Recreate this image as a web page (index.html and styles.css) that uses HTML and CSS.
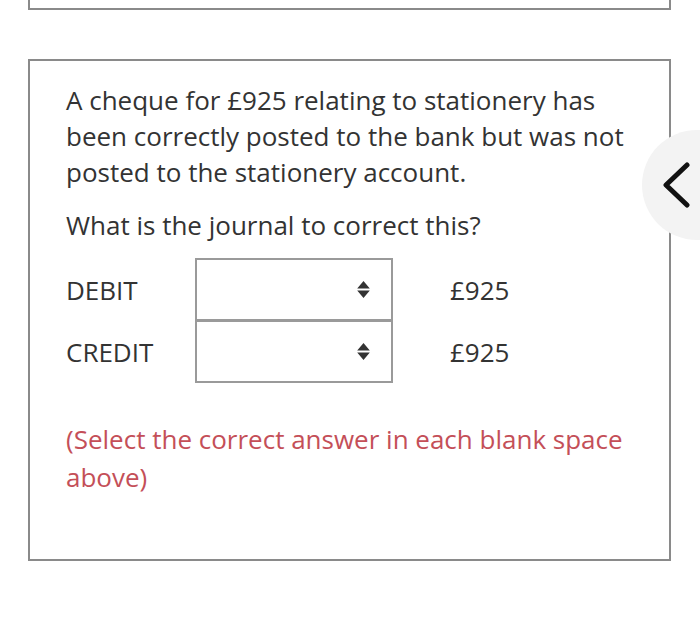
FILE: index.html
```html
<!DOCTYPE html>
<html>
<head>
<meta charset="utf-8">
<link rel="stylesheet" href="styles.css">
</head>
<body>
<div class="prev-card"></div>
<div class="card">
  <p class="question">A cheque for £925 relating to stationery has been correctly posted to the bank but was not posted to the stationery account.</p>
  <p class="question ask">What is the journal to correct this?</p>
  <div class="journal">
    <div class="row">
      <span class="label">DEBIT</span>
      <div class="select">
        <svg class="sort" viewBox="0 0 14 20" width="15" height="21"><path d="M7 2 L13 9 L1 9 Z M1 11 L13 11 L7 18 Z" fill="#333"/></svg>
      </div>
      <span class="amount">£925</span>
    </div>
    <div class="row second">
      <span class="label">CREDIT</span>
      <div class="select">
        <svg class="sort" viewBox="0 0 14 20" width="15" height="21"><path d="M7 2 L13 9 L1 9 Z M1 11 L13 11 L7 18 Z" fill="#333"/></svg>
      </div>
      <span class="amount">£925</span>
    </div>
  </div>
  <p class="hint">(Select the correct answer in each blank space above)</p>
</div>
<div class="nav-back">
  <svg viewBox="0 0 30 46" width="30" height="46"><path d="M26 3 L5 23 L26 43" fill="none" stroke="#111" stroke-width="5" stroke-linecap="round" stroke-linejoin="round"/></svg>
</div>
</body>
</html>
```
FILE: styles.css
```css
html, body {
  margin: 0;
  padding: 0;
  background: #ffffff;
}
body {
  font-family: "Open Sans", "Liberation Sans", sans-serif;
  color: #333333;
  position: relative;
  width: 700px;
  height: 627px;
  overflow: hidden;
}
.prev-card {
  margin-left: 28px;
  width: 639px;
  height: 8px;
  border: 2px solid #8a8a8a;
  border-top: none;
}
.card {
  margin-top: 49px;
  margin-left: 28px;
  width: 643px;
  border: 2px solid #8a8a8a;
  padding: 21px 30px 0 36px;
  box-sizing: border-box;
  height: 502px;
}
.question {
  margin: 0;
  font-size: 26px;
  line-height: 36px;
  color: #333333;
}
.ask {
  margin-top: 17px;
}
.journal {
  margin-top: 15px;
  display: flex;
  flex-direction: column;
}
.row {
  display: grid;
  grid-template-columns: 129px 198px auto;
  align-items: center;
  height: 63px;
}
.row.second {
  margin-top: -1px;
}
.label {
  font-size: 26px;
  color: #333333;
}
.select {
  height: 100%;
  box-sizing: border-box;
  border: 2px solid #9a9a9a;
  display: flex;
  align-items: center;
  justify-content: flex-end;
  padding-right: 20px;
}
.amount {
  font-size: 26px;
  margin-left: 57px;
  color: #333333;
}
.hint {
  margin: 37px 0 0;
  font-size: 26px;
  line-height: 38px;
  color: #c44f58;
}
.nav-back {
  position: absolute;
  left: 642px;
  top: 130px;
  width: 58px;
  height: 110px;
  border-radius: 55px 0 0 55px;
  background: #f3f3f3;
  display: flex;
  align-items: center;
  padding-left: 19px;
  box-sizing: border-box;
}
```
